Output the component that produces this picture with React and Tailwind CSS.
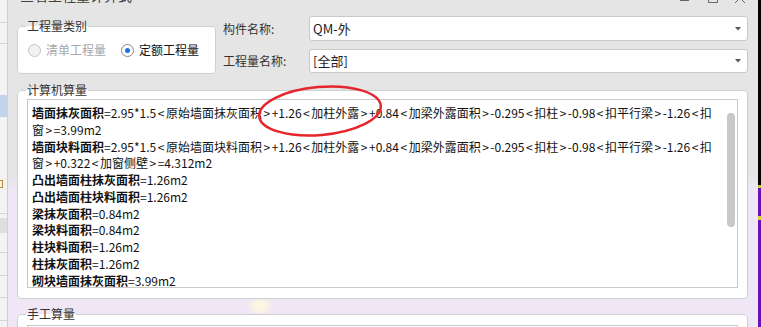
import React from "react";

const lines = [
  ["墙面抹灰面积", "=2.95*1.5<原始墙面抹灰面积>+1.26<加柱外露>+0.84<加梁外露面积>-0.295<扣柱>-0.98<扣平行梁>-1.26<扣"],
  [null, "窗>=3.99m2"],
  ["墙面块料面积", "=2.95*1.5<原始墙面块料面积>+1.26<加柱外露>+0.84<加梁外露面积>-0.295<扣柱>-0.98<扣平行梁>-1.26<扣"],
  [null, "窗>+0.322<加窗侧壁>=4.312m2"],
  ["凸出墙面柱抹灰面积", "=1.26m2"],
  ["凸出墙面柱块料面积", "=1.26m2"],
  ["梁抹灰面积", "=0.84m2"],
  ["梁块料面积", "=0.84m2"],
  ["柱块料面积", "=1.26m2"],
  ["柱抹灰面积", "=1.26m2"],
  ["砌块墙面抹灰面积", "=3.99m2"],
];

function Formula({ text }) {
  const parts = text.split(/([<>])/);
  return parts.map((p, i) =>
    p === "<" || p === ">" ? (
      <span key={i} className="px-[1.5px]">{p}</span>
    ) : (
      <span key={i}>{p}</span>
    )
  );
}

function Arrow() {
  return (
    <svg width="6" height="4" viewBox="0 0 6 4" className="shrink-0">
      <path d="M0 0 H6 L3 3.5 Z" fill="#555" />
    </svg>
  );
}

function Select({ value, h }) {
  return (
    <div className={`${h} flex items-center bg-white border border-[#c9c9c9] rounded-[3px] pl-[3px] pr-[6px]`}>
      <span className="flex-1 text-[13px] text-[#222]">{value}</span>
      <Arrow />
    </div>
  );
}

export default function App() {
  return (
    <div className="w-[761px] h-[327px] overflow-hidden relative flex font-['Noto_Sans_CJK_SC',sans-serif] bg-[#e5e5e5]">
      {/* background window on the left */}
      <div className="w-[7px] shrink-0 flex flex-col bg-[#f3f3f3]">
        <div className="h-[22px] shrink-0" />
        <div className="h-px shrink-0 bg-[#d6d6d6]" />
        <div className="h-[20px] shrink-0" />
        <div className="h-px shrink-0 bg-[#d6d6d6]" />
        <div className="h-[51px] shrink-0" />
        <div className="h-[22px] shrink-0 bg-[#c3d4ea]" />
        <div className="h-[63px] shrink-0" />
        <div className="h-[8px] shrink-0 flex">
          <div className="w-[3px] border-y border-r border-[#c98a2e]" />
        </div>
        <div className="h-[25px] shrink-0" />
        <div className="h-px shrink-0 bg-[#d6d6d6]" />
        <div className="h-[4px] shrink-0" />
        <div className="h-[15px] shrink-0 bg-[#dedede]" />
        <div className="h-[19px] shrink-0" />
        <div className="h-px shrink-0 bg-[#d6d6d6]" />
        <div className="h-[22px] shrink-0" />
        <div className="h-px shrink-0 bg-[#d6d6d6]" />
        <div className="h-[21px] shrink-0" />
        <div className="h-px shrink-0 bg-[#d6d6d6]" />
        <div className="h-[22px] shrink-0" />
        <div className="h-px shrink-0 bg-[#d6d6d6]" />
      </div>
      <div className="w-px shrink-0 bg-[#cfcfcf]" />

      {/* dialog */}
      <div className="w-[750px] shrink-0 flex flex-col bg-[radial-gradient(ellipse_14px_10px_at_252px_306px,#fbf5e2_0%,#fbf5e2_40%,transparent_100%),linear-gradient(180deg,#e5e5e5_0%,#e5e5e5_54%,#efe6f6_58%,#efe6f6_100%)]">
        {/* title bar (mostly cut off) */}
        <div className="h-[4px] overflow-hidden flex items-end pl-[12px] shrink-0">
          <span className="text-[14px] leading-[18px] text-[#444] whitespace-nowrap">查看工程量计算式</span>
          <div className="ml-auto mr-[13px] flex self-start">
            <svg width="9" height="4" className="mr-[19px]">
              <line x1="0" y1="0.5" x2="9" y2="0.5" stroke="#666" strokeWidth="1" />
            </svg>
            <svg width="10" height="4" className="mr-[17px]">
              <path d="M0.5 0 V2.5 H9.5 V0" fill="none" stroke="#666" strokeWidth="1" />
            </svg>
            <svg width="10" height="4">
              <path d="M0 -7 L10 3 M10 -7 L0 3" fill="none" stroke="#666" strokeWidth="1" />
            </svg>
          </div>
        </div>

        {/* top section */}
        <div className="flex mt-[12px] pl-[9px] pr-[10px] shrink-0">
          <fieldset className="w-[199px] h-[56px] mt-[2px] border border-[#cfcfcf] rounded-[4px] bg-white pl-[10px] shrink-0">
            <legend className="px-[1px] ml-[-2px] text-[12px] leading-[16px] text-[#333]">工程量类别</legend>
            <div className="flex items-center mt-[8px] h-[16px] text-[12px]">
              <span className="w-[13px] h-[13px] rounded-full border border-[#c4c4c4] bg-[#f2f2f2] shrink-0" />
              <span className="ml-[5px] text-[#a8a8a8]">清单工程量</span>
              <span className="ml-[15px] w-[13px] h-[13px] rounded-full border border-[#8a8a8a] bg-white flex items-center justify-center shrink-0">
                <span className="w-[5px] h-[5px] rounded-full bg-[#1b6fe0]" />
              </span>
              <span className="ml-[5px] text-[#111]">定额工程量</span>
            </div>
          </fieldset>
          <div className="ml-[7px] w-[86px] flex flex-col gap-[8px] text-[12px] text-[#333] shrink-0">
            <div className="h-[25px] flex items-center">构件名称:</div>
            <div className="h-[24px] flex items-center">工程量名称:</div>
          </div>
          <div className="flex-1 flex flex-col gap-[8px]">
            <Select value="QM-外" h="h-[25px]" />
            <Select value="[全部]" h="h-[24px]" />
          </div>
        </div>

        {/* computer quantity */}
        <div className="pl-[9px] pr-[10px] mt-[8px] shrink-0">
          <fieldset className="h-[217px] border border-[#cfcfcf] rounded-[4px] bg-white px-[9px]">
            <legend className="px-[1px] ml-[-1px] text-[12px] leading-[16px] text-[#333]">计算机算量</legend>
            <div className="mt-[1px] h-[189px] border border-[#c9c9c9] bg-white flex overflow-hidden">
              <div className="flex-1 pl-[4px] pt-[5px] overflow-hidden text-[12px] leading-[16.75px] text-[#111]">
                {lines.map(([b, t], i) => (
                  <div key={i} className="whitespace-nowrap">
                    {b && <span className="font-bold">{b}</span>}
                    <Formula text={t} />
                  </div>
                ))}
              </div>
              <div className="w-[8px] h-[114px] mt-[13px] mr-[2px] rounded-full bg-[#c8c8c8] shrink-0" />
            </div>
          </fieldset>
        </div>

        {/* manual quantity */}
        <div className="pl-[9px] pr-[10px] mt-[7px] shrink-0">
          <fieldset className="h-[60px] border border-[#cfcfcf] rounded-[4px] bg-white px-[9px]">
            <legend className="px-[1px] ml-[-1px] text-[12px] leading-[16px] text-[#333]">手工算量</legend>
            <div className="mt-[3px] h-[40px] border border-[#c9c9c9] bg-white" />
          </fieldset>
        </div>
      </div>

      {/* background window on the right */}
      <div className="w-[3px] shrink-0 flex flex-col">
        <div className="h-[185px] shrink-0 bg-black" />
        <div className="h-[3px] shrink-0 bg-[#c9c83a]" />
        <div className="h-[28px] shrink-0 bg-[#6a10b8]" />
        <div className="h-[4px] shrink-0 bg-[#d8d23a]" />
        <div className="flex-1 bg-[#6a10b8]" />
      </div>

      {/* red annotation ellipse */}
      <svg className="absolute left-0 top-0 pointer-events-none" width="761" height="327">
        <ellipse cx="320" cy="111" rx="61" ry="24" transform="rotate(-5 320 111)" fill="none" stroke="#e6262c" strokeWidth="2.5" />
      </svg>
    </div>
  );
}
